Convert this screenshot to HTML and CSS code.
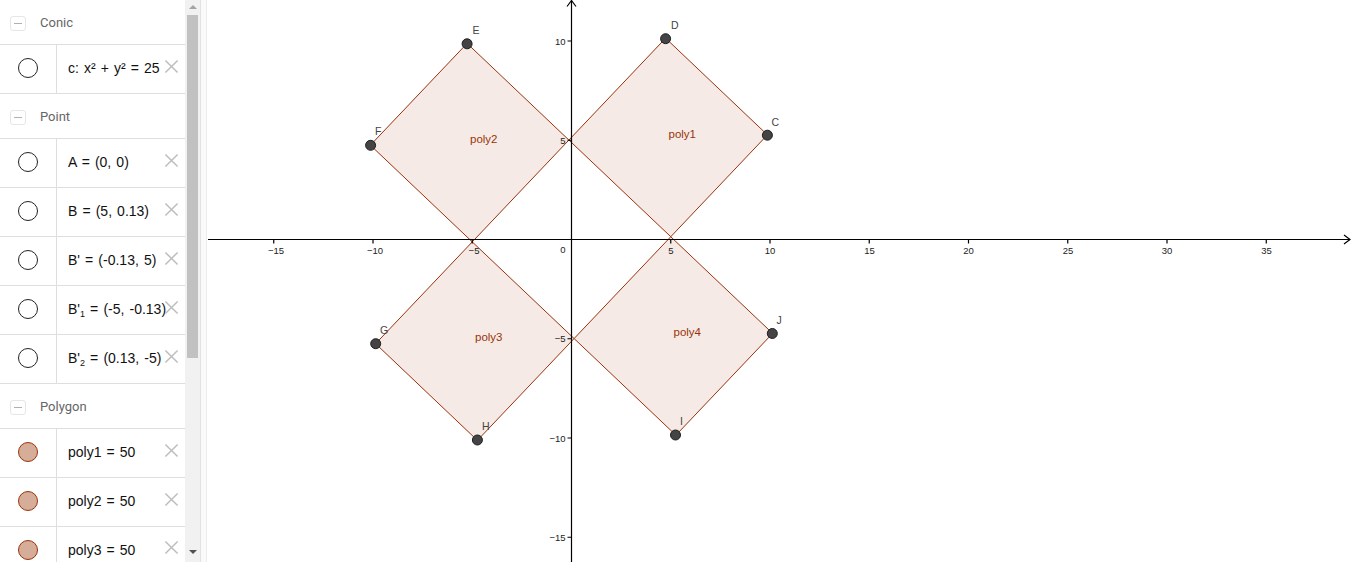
FILE: index.html
```html
<!DOCTYPE html>
<html>
<head>
<meta charset="utf-8">
<title>Algebra and Graphics</title>
<link rel="stylesheet" href="styles.css">
</head>
<body>
<div class="app">
  <aside class="algebra">
    <div class="list">
      <div class="group"><span class="toggle"></span><span class="group-title">Conic</span></div>
      <div class="item"><div class="marble"><span class="dot"></span></div><div class="def">c: x² + y² = 25</div><svg class="close" viewBox="0 0 16 16"><path d="M1.5 1.5L14.5 14.5M14.5 1.5L1.5 14.5"/></svg></div>
      <div class="group"><span class="toggle"></span><span class="group-title">Point</span></div>
      <div class="item"><div class="marble"><span class="dot"></span></div><div class="def">A = (0, 0)</div><svg class="close" viewBox="0 0 16 16"><path d="M1.5 1.5L14.5 14.5M14.5 1.5L1.5 14.5"/></svg></div>
      <div class="item"><div class="marble"><span class="dot"></span></div><div class="def">B = (5, 0.13)</div><svg class="close" viewBox="0 0 16 16"><path d="M1.5 1.5L14.5 14.5M14.5 1.5L1.5 14.5"/></svg></div>
      <div class="item"><div class="marble"><span class="dot"></span></div><div class="def">B' = (-0.13, 5)</div><svg class="close" viewBox="0 0 16 16"><path d="M1.5 1.5L14.5 14.5M14.5 1.5L1.5 14.5"/></svg></div>
      <div class="item"><div class="marble"><span class="dot"></span></div><div class="def">B'<sub>1</sub> = (-5, -0.13)</div><svg class="close" viewBox="0 0 16 16"><path d="M1.5 1.5L14.5 14.5M14.5 1.5L1.5 14.5"/></svg></div>
      <div class="item"><div class="marble"><span class="dot"></span></div><div class="def">B'<sub>2</sub> = (0.13, -5)</div><svg class="close" viewBox="0 0 16 16"><path d="M1.5 1.5L14.5 14.5M14.5 1.5L1.5 14.5"/></svg></div>
      <div class="group"><span class="toggle"></span><span class="group-title">Polygon</span></div>
      <div class="item"><div class="marble"><span class="dot filled"></span></div><div class="def">poly1 = 50</div><svg class="close" viewBox="0 0 16 16"><path d="M1.5 1.5L14.5 14.5M14.5 1.5L1.5 14.5"/></svg></div>
      <div class="item"><div class="marble"><span class="dot filled"></span></div><div class="def">poly2 = 50</div><svg class="close" viewBox="0 0 16 16"><path d="M1.5 1.5L14.5 14.5M14.5 1.5L1.5 14.5"/></svg></div>
      <div class="item last"><div class="marble"><span class="dot filled"></span></div><div class="def">poly3 = 50</div><svg class="close" viewBox="0 0 16 16"><path d="M1.5 1.5L14.5 14.5M14.5 1.5L1.5 14.5"/></svg></div>
    </div>
    <div class="scrollbar">
      <span class="arrow up"></span>
      <div class="thumb"></div>
      <span class="arrow down"></span>
    </div>
  </aside>
  <div class="splitter"></div>
  <main class="graphics">
    <svg class="plane" width="1145" height="562" viewBox="207 0 1145 562">
      <g class="polys">
        <polygon points="568.9,140.05 670.75,236.72 767.4,134.9 665.6,38.2"/>
        <polygon points="568.9,140.05 467.1,43.4 370.4,145.2 472.25,241.9"/>
        <polygon points="472.25,241.9 375.6,343.7 477.4,440.4 574.1,338.55"/>
        <polygon points="574.1,338.55 670.75,236.72 772.6,333.4 675.9,435.2"/>
      </g>
      <g class="axes">
        <line x1="208" y1="239.5" x2="1350" y2="239.5"/>
        <polyline points="1344,235 1350,239.5 1344,244"/>
        <line x1="571.5" y1="0.5" x2="571.5" y2="562"/>
        <polyline points="567,6.5 571.5,0.5 576,6.5"/>
        <path d="M273.75 239.5v4M373 239.5v4M472.25 239.5v4M670.75 239.5v4M770 239.5v4M869.25 239.5v4M968.5 239.5v4M1067.75 239.5v4M1167 239.5v4M1266.25 239.5v4"/>
        <path d="M567.5 41h4M567.5 140.25h4M567.5 338.75h4M567.5 438h4M567.5 537.25h4"/>
      </g>
      <g class="ticklabels xl">
        <text x="276" y="253.5">−15</text>
        <text x="375" y="253.5">−10</text>
        <text x="474" y="253.5">−5</text>
        <text x="671" y="253.5">5</text>
        <text x="770" y="253.5">10</text>
        <text x="869.5" y="253.5">15</text>
        <text x="968.5" y="253.5">20</text>
        <text x="1068" y="253.5">25</text>
        <text x="1167" y="253.5">30</text>
        <text x="1266.5" y="253.5">35</text>
      </g>
      <g class="ticklabels yl">
        <text x="565.5" y="252.5">0</text>
        <text x="565.5" y="44.5">10</text>
        <text x="565.5" y="143.5">5</text>
        <text x="565.5" y="342">−5</text>
        <text x="565.5" y="441.5">−10</text>
        <text x="565.5" y="540.5">−15</text>
      </g>
      <g class="polylabels">
        <text x="668.5" y="137.5">poly1</text>
        <text x="470" y="142.5">poly2</text>
        <text x="475" y="340.5">poly3</text>
        <text x="673.5" y="336">poly4</text>
      </g>
      <g class="points">
        <circle cx="665.6" cy="38.7" r="5"/>
        <circle cx="767.4" cy="135.2" r="5"/>
        <circle cx="467.1" cy="43.8" r="5"/>
        <circle cx="370.6" cy="145.3" r="5"/>
        <circle cx="375.7" cy="343.7" r="5"/>
        <circle cx="477.4" cy="440" r="5"/>
        <circle cx="675.5" cy="435" r="5"/>
        <circle cx="772.3" cy="333.5" r="5"/>
      </g>
      <g class="ptlabels">
        <text x="671" y="29">D</text>
        <text x="771.5" y="126">C</text>
        <text x="472.5" y="34">E</text>
        <text x="375" y="135">F</text>
        <text x="380" y="333.5">G</text>
        <text x="482" y="430">H</text>
        <text x="680" y="425">I</text>
        <text x="776.5" y="324">J</text>
      </g>
    </svg>
  </main>
</div>
</body>
</html>
```
FILE: styles.css
```css
html, body {
  margin: 0;
  padding: 0;
  background: #ffffff;
}
body {
  font-family: "Liberation Sans", Arial, sans-serif;
  width: 1352px;
  height: 562px;
  overflow: hidden;
}
.app {
  display: flex;
  width: 1352px;
  height: 562px;
}
.algebra {
  display: flex;
  width: 200px;
  height: 562px;
  flex: none;
  background: #ffffff;
}
.list {
  width: 185px;
  height: 562px;
  overflow: hidden;
  flex: none;
}
.group {
  display: flex;
  align-items: center;
  height: 44px;
  border-bottom: 1px solid #dedede;
  padding-left: 10px;
}
.toggle {
  position: relative;
  width: 14px;
  height: 13px;
  border: 1px solid #e6e6e6;
  border-radius: 3px;
  flex: none;
  margin-top: 2px;
}
.toggle::after {
  content: "";
  position: absolute;
  left: 3px;
  top: 6px;
  width: 8px;
  height: 1px;
  background: #b0b0b0;
}
.group-title {
  margin-left: 14px;
  font-family: Roboto, "Liberation Sans", sans-serif;
  font-size: 13px;
  color: #666666;
}
.item {
  display: flex;
  align-items: center;
  height: 48px;
  border-bottom: 1px solid #dedede;
}
.item.last {
  height: 36px;
  align-items: flex-start;
  border-bottom: none;
}
.item.last .marble {
  height: 36px;
  align-items: flex-start;
}
.item.last .dot {
  margin-top: 13px;
}
.item.last .def {
  margin-top: 15px;
}
.item.last .close {
  margin-top: 13px;
}
.marble {
  width: 56px;
  height: 48px;
  flex: none;
  display: flex;
  align-items: center;
  justify-content: center;
  border-right: 1px solid #dedede;
}
.dot {
  width: 18px;
  height: 18px;
  border: 1px solid #222222;
  border-radius: 50%;
  margin-left: -1px;
  margin-top: -2px;
  background: #ffffff;
}
.dot.filled {
  background: #d6ad99;
  border-color: #99330a;
}
.def {
  flex: 1;
  min-width: 0;
  padding-left: 11px;
  white-space: nowrap;
  font-size: 14px;
  word-spacing: 1.2px;
  color: #111111;
  margin-top: -2px;
}
.def sub {
  font-size: 9px;
  vertical-align: -3px;
  line-height: 0;
}
.close {
  width: 15px;
  height: 15px;
  flex: none;
  margin-right: 6px;
  margin-top: -6px;
}
.close path {
  stroke: #bdbdbd;
  stroke-width: 1.6;
  fill: none;
}
.scrollbar {
  width: 15px;
  height: 562px;
  flex: none;
  background: #f1f1f1;
  display: flex;
  flex-direction: column;
  align-items: center;
}
.arrow {
  width: 0;
  height: 0;
  border-left: 4px solid transparent;
  border-right: 4px solid transparent;
  flex: none;
}
.arrow.up {
  border-bottom: 4px solid #a3a3a3;
  margin-top: 5px;
}
.arrow.down {
  border-top: 4px solid #505050;
  margin-top: auto;
  margin-bottom: 8px;
}
.thumb {
  width: 11px;
  height: 343px;
  margin-top: 6px;
  background: #c1c1c1;
}
.splitter {
  width: 5px;
  height: 562px;
  flex: none;
  background: #fafafa;
  border-left: 1px solid #e2e2e2;
  border-right: 1px solid #ededed;
}
.graphics {
  width: 1145px;
  height: 562px;
  flex: none;
  background: #ffffff;
}
.plane {
  display: block;
}
.polys polygon {
  fill: rgba(153, 51, 0, 0.1);
  stroke: #99330a;
  stroke-width: 1;
}
.axes line, .axes polyline, .axes path {
  stroke: #000000;
  stroke-width: 1.2;
  fill: none;
}
.ticklabels text {
  font-family: "Liberation Sans", Arial, sans-serif;
  font-size: 9.5px;
  fill: #222222;
}
.xl text {
  text-anchor: middle;
}
.yl text {
  text-anchor: end;
}
.polylabels text {
  font-family: "Liberation Sans", Arial, sans-serif;
  font-size: 11.5px;
  fill: #99330a;
}
.points circle {
  fill: #444444;
  stroke: #1e1e1e;
  stroke-width: 1;
}
.ptlabels text {
  font-family: "Liberation Sans", Arial, sans-serif;
  font-size: 10.5px;
  fill: #444444;
}
```
